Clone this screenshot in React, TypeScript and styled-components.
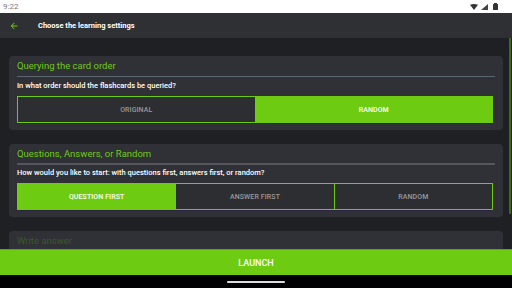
import React from "react";
import styled, { createGlobalStyle } from "styled-components";

const GREEN = "#6dcc12";

const Global = createGlobalStyle`
  html, body {
    margin: 0;
    padding: 0;
    background: #1f2024;
  }
  * {
    box-sizing: border-box;
  }
`;

const Screen = styled.div`
  width: 512px;
  height: 288px;
  display: flex;
  flex-direction: column;
  overflow: hidden;
  font-family: Roboto, "Noto Sans", sans-serif;
  background: #1f2024;
`;

const StatusBar = styled.div`
  height: 13px;
  background: #fff;
  display: flex;
  align-items: center;
  justify-content: space-between;
  padding: 0 14px 0 3px;
  color: #777;
  font-size: 8px;
`;

const StatusIcons = styled.div`
  display: flex;
  align-items: center;
  gap: 2px;
`;

const AppBar = styled.div`
  height: 25px;
  background: #2f3034;
  display: flex;
  align-items: center;
  padding-left: 9px;
  gap: 19px;
`;

const AppTitle = styled.div`
  color: #fff;
  font-size: 7.5px;
  font-weight: 700;
`;

const Content = styled.div`
  position: relative;
  flex: 1;
  overflow: hidden;
  display: flex;
  flex-direction: column;
  gap: 14px;
  padding: 18px 9px 0 9px;
`;

const ScrollThumb = styled.div`
  position: absolute;
  right: 1px;
  top: 0;
  width: 2px;
  height: 176px;
  background: #3f6a1c;
`;

const Card = styled.div`
  flex-shrink: 0;
  background: #303136;
  border-radius: 4px;
  padding: 4px 8px 7px 8px;
  display: flex;
  flex-direction: column;
`;

const CardTitle = styled.div<{ $dim?: boolean }>`
  color: ${({ $dim }) => ($dim ? "#3b5a25" : GREEN)};
  font-size: 9.5px;
  line-height: 12px;
  height: 12px;
`;

const Divider = styled.div<{ $thick?: boolean }>`
  margin: ${({ $thick }) => ($thick ? "3px 0 2px" : "4px 0 3px")};
  height: ${({ $thick }) => ($thick ? "2px" : "1px")};
  background: ${({ $thick }) => ($thick ? "#55575c" : "#5a6670")};
`;

const Question = styled.div`
  color: #fff;
  font-size: 7.5px;
  font-weight: 500;
  line-height: 12px;
`;

const Options = styled.div`
  margin-top: 4px;
  margin-right: 2px;
  display: flex;
  height: 27px;
  box-shadow: 0 1px 0 #2b2340;
`;

const Option = styled.div<{ $active?: boolean }>`
  flex: 1;
  display: flex;
  align-items: center;
  justify-content: center;
  border: 1px solid ${GREEN};
  margin-left: -1px;
  &:first-child {
    margin-left: 0;
  }
  background: ${({ $active }) => ($active ? GREEN : "#2d2e32")};
  color: ${({ $active }) => ($active ? "#fff" : "#9a9a9a")};
  font-size: 7px;
  font-weight: 500;
  letter-spacing: 0.1px;
`;

const LaunchBar = styled.div`
  height: 26px;
  flex-shrink: 0;
  background: ${GREEN};
  border-top: 1px solid #5aa81a;
  display: flex;
  align-items: center;
  justify-content: center;
  color: #fff;
  font-size: 9px;
  font-weight: 500;
`;

const NavBar = styled.div`
  height: 13px;
  flex-shrink: 0;
  background: #000;
  display: flex;
  align-items: center;
  justify-content: center;
`;

const HomeIndicator = styled.div`
  width: 58px;
  height: 2px;
  border-radius: 1px;
  background: #ddd;
`;

function BackArrow() {
  return (
    <svg width="10" height="10" viewBox="0 0 24 24">
      <path d="M20 11H7.83l5.59-5.59L12 4l-8 8 8 8 1.41-1.41L7.83 13H20v-2z" fill={GREEN} />
    </svg>
  );
}

function StatusGlyphs() {
  return (
    <StatusIcons>
      <svg width="8" height="6" viewBox="0 0 8 6">
        <path d="M0 0.8 Q4 -0.8 8 0.8 L4 6 Z" fill="#333" />
      </svg>
      <svg width="7" height="6" viewBox="0 0 7 6" style={{ marginLeft: 1 }}>
        <path d="M7 0 L7 6 L0 6 Z" fill="#444" />
      </svg>
      <svg width="5" height="7" viewBox="0 0 5 7" style={{ marginLeft: 3 }}>
        <rect x="1" y="0" width="3" height="1" fill="#333" />
        <rect x="0" y="1" width="5" height="6" rx="0.5" fill="#333" />
      </svg>
    </StatusIcons>
  );
}

type OptionGroupProps = { options: string[]; active: number };

function OptionGroup({ options, active }: OptionGroupProps) {
  return (
    <Options>
      {options.map((o, i) => (
        <Option key={o} $active={i === active}>
          {o}
        </Option>
      ))}
    </Options>
  );
}

export default function App() {
  return (
    <>
      <Global />
      <Screen>
        <StatusBar>
          <span>9:22</span>
          <StatusGlyphs />
        </StatusBar>
        <AppBar>
          <BackArrow />
          <AppTitle>Choose the learning settings</AppTitle>
        </AppBar>
        <Content>
          <ScrollThumb />
          <Card>
            <CardTitle>Querying the card order</CardTitle>
            <Divider />
            <Question>In what order should the flashcards be queried?</Question>
            <OptionGroup options={["ORIGINAL", "RANDOM"]} active={1} />
          </Card>
          <Card>
            <CardTitle>Questions, Answers, or Random</CardTitle>
            <Divider $thick />
            <Question>How would you like to start: with questions first, answers first, or random?</Question>
            <OptionGroup options={["QUESTION FIRST", "ANSWER FIRST", "RANDOM"]} active={0} />
          </Card>
          <Card>
            <CardTitle $dim>Write answer</CardTitle>
          </Card>
        </Content>
        <LaunchBar>LAUNCH</LaunchBar>
        <NavBar>
          <HomeIndicator />
        </NavBar>
      </Screen>
    </>
  );
}
